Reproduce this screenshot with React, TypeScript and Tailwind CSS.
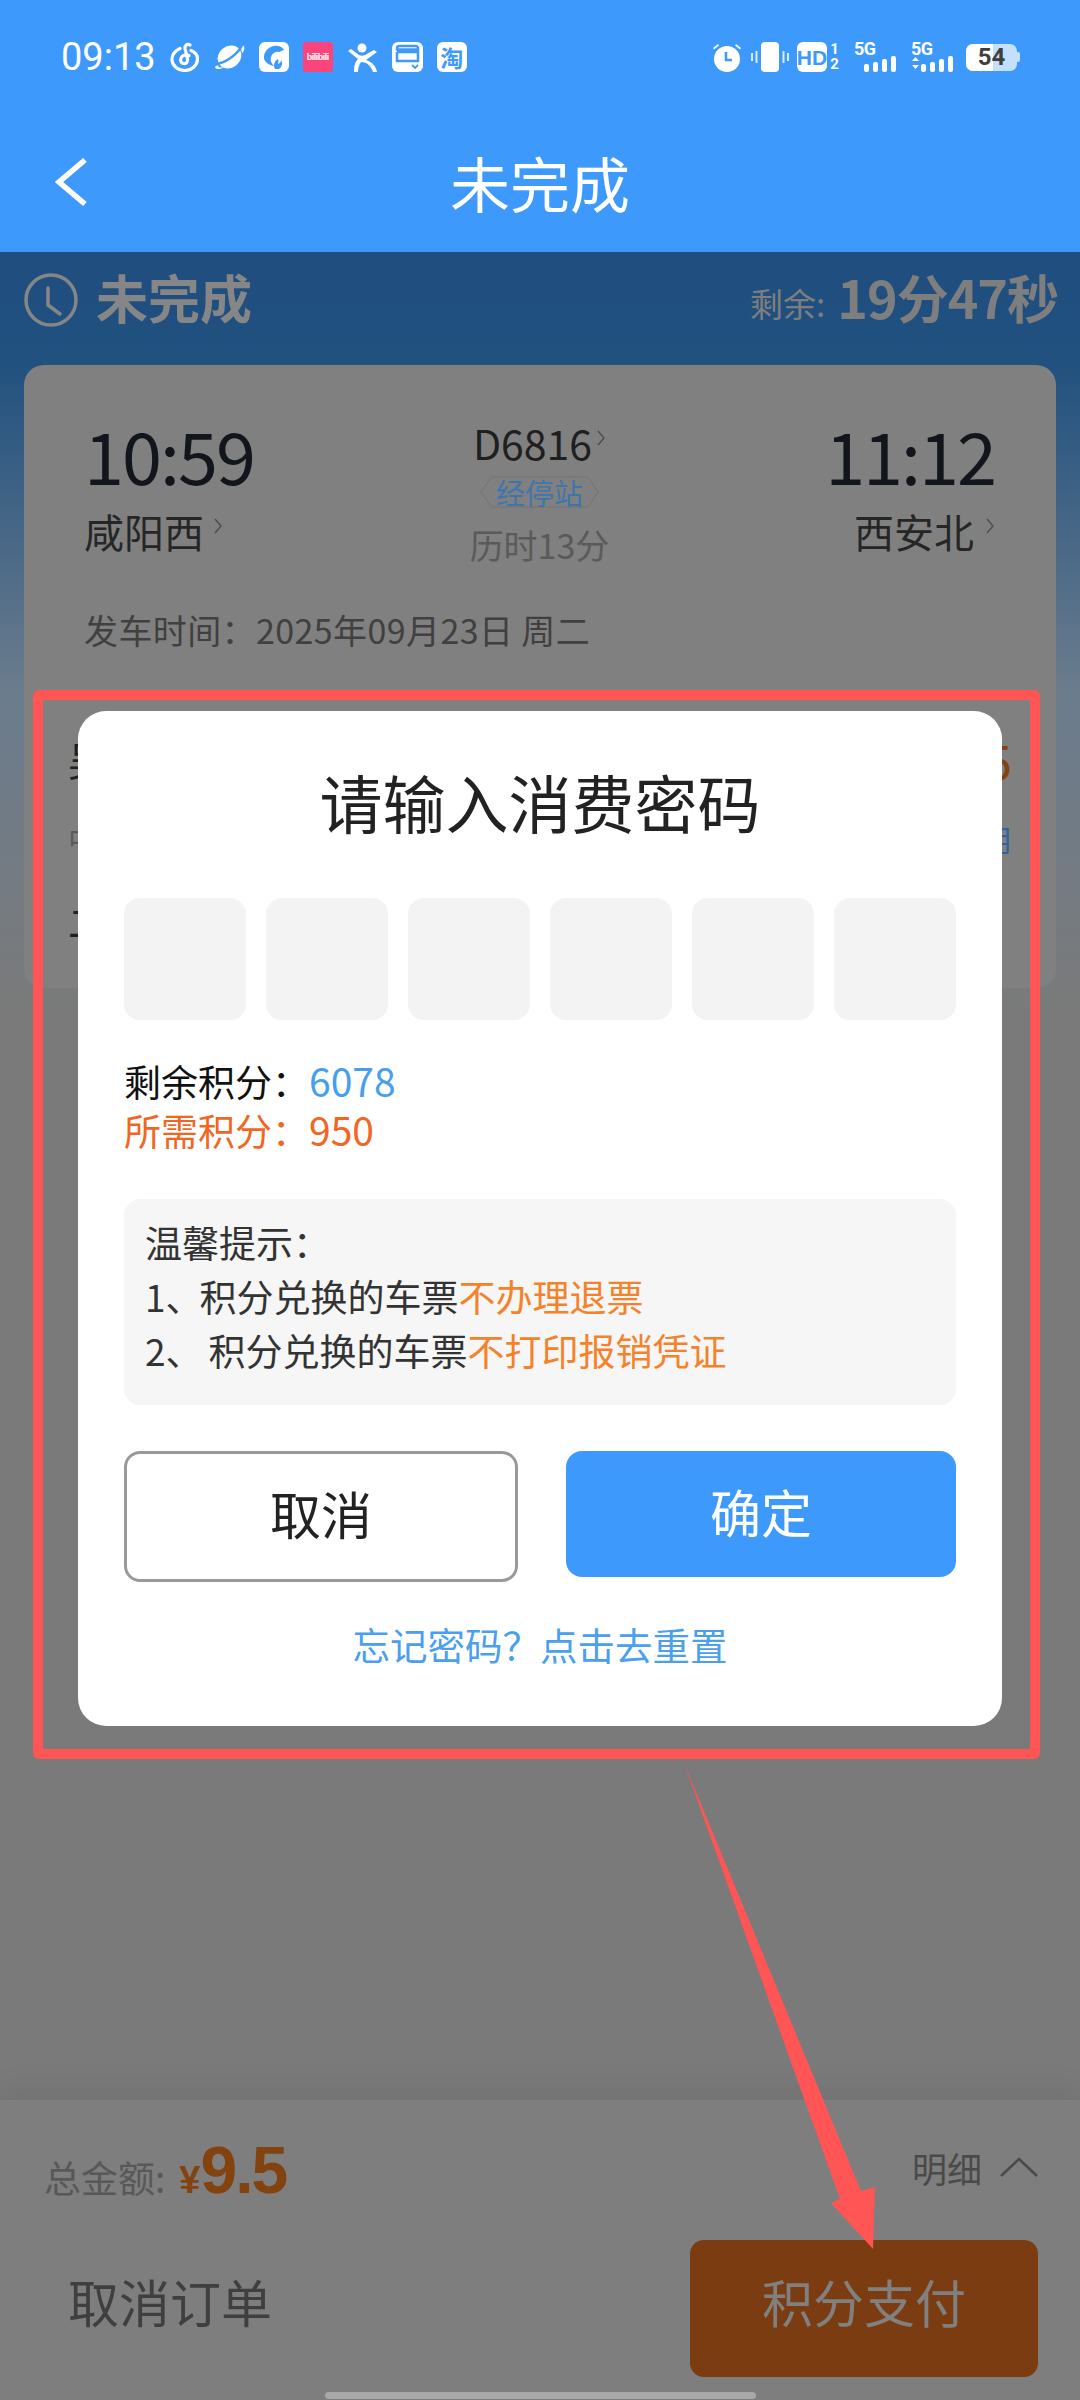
const cjk = "font-['Noto_Sans_CJK_SC','Noto_Sans',sans-serif]";

function Chevron({ className }: { className: string }) {
  return (
    <svg viewBox="0 0 10 20" className={className} fill="none" stroke="currentColor" strokeWidth="1.3">
      <path d="M2 3l6 7-6 7" />
    </svg>
  );
}

function StatusLeftIcons() {
  return (
    <div className="flex items-center ml-[14px] gap-[14px]">
      <svg viewBox="0 0 30 30" className="w-[30px] h-[30px]" fill="none" stroke="white" strokeWidth="3.200" strokeLinecap="round">
        <path d="M20 3c-3-1.500-5.500 .5-5 3.500l2.500 10.500c.6 3-1.500 5-4 4.500S10 18.500 11 16s4.500-4 8-2.500" />
        <path d="M10 6.500C4.500 9 1.800 13 2 18c.3 6 6 10.500 13 10.500S27.500 23 27.500 17c0-4-2.500-7-6.500-8.500" />
      </svg>
      <svg viewBox="0 0 32 30" className="w-[31px] h-[30px]">
        <ellipse cx="16" cy="15" rx="11" ry="13" transform="rotate(50 16 15)" fill="white" />
        <path d="M3 22C11 21 22 14 28 5" fill="none" stroke="#3d99fc" strokeWidth="2.500" />
        <path d="M1 25c0 2 3 3 6 2l3-1-5-.5-1-2zM30 3l1 1c1 2 0 5-2 7l-1-4z" fill="white" />
      </svg>
      <div className="w-[30px] h-[30px] rounded-[6px] bg-white flex items-center justify-center">
        <svg viewBox="0 0 30 30" className="w-[30px] h-[30px]" fill="#3d99fc">
          <path d="M5 14C6 8 12 3 19 4c2 0 4 1 6 4l-3 1-1 1c-4-1-8 1-9 5-1 4 1 7 3 9-6-1-11-5-10-10z" />
          <path d="M16 27c-2-3-1-8 3-10 1 2 0 3 0 5 2-1 3-2 3-4 2 3 1 7-2 9z" />
        </svg>
      </div>
      <div className="w-[30px] h-[30px] rounded-[3px] bg-[#f9447c] flex items-center justify-center overflow-hidden">
        <span className="text-[9px] leading-none text-white font-['Liberation_Sans',sans-serif] font-bold tracking-[-0.5px]">bilibili</span>
      </div>
      <svg viewBox="0 0 31 30" className="w-[31px] h-[30px]" fill="white">
        <circle cx="15" cy="6" r="4.500" />
        <path d="M1 9l3-2 8 6c2 1 4 1 6 0l9-5 3 2-11 8c6 2 10 6 11 12h-4c-2-6-6-10-12-10-2 3-3 6-3 10H7c0-6 1-10 4-13z" />
      </svg>
      <svg viewBox="0 0 31 30" className="w-[31px] h-[30px]">
        <rect width="31" height="30" rx="6" fill="white" />
        <path d="M5 7.500V6c0-1 1-2 2-2h17c1 0 2 1 2 2v1.500zM5 10h21v1.500M5 10v9h21v-9" fill="none" stroke="#3d99fc" strokeWidth="2.500" />
        <path d="M20 23l3 3 3-3" fill="none" stroke="#3d99fc" strokeWidth="1.800" />
      </svg>
      <div className="w-[30px] h-[30px] rounded-[6px] bg-white flex items-center justify-center">
        <span className="text-[23px] leading-none font-bold text-[#3d99fc]">淘</span>
      </div>
    </div>
  );
}

function StatusRightIcons() {
  return (
    <div className="flex items-center">
      <svg viewBox="0 0 30 30" className="w-[30px] h-[30px]" fill="white">
        <circle cx="15" cy="17" r="13" />
        <path d="M14 10v8h6" fill="none" stroke="#3d99fc" strokeWidth="2.500" />
        <path d="M1 6l5-4 1 1.500-5 4zM29 6l-5-4-1 1.500 5 4z" />
      </svg>
      <svg viewBox="0 0 38 30" className="w-[38px] h-[30px] ml-[9px]" fill="white">
        <rect x="10" y="0" width="18" height="30" rx="4" />
        <rect x="4.500" y="9" width="2" height="12" opacity="0.8" />
        <rect x="0" y="11" width="2" height="8" opacity="0.8" />
        <rect x="31.500" y="9" width="2" height="12" opacity="0.8" />
        <rect x="36" y="11" width="2" height="8" opacity="0.8" />
      </svg>
      <div className="ml-[8px] w-[30px] h-[30px] rounded-[6px] bg-white flex items-center justify-center">
        <span className="text-[21px] leading-none font-black text-[#3d99fc] font-['Liberation_Sans',sans-serif]">HD</span>
      </div>
      <div className="w-[13px] ml-[1px] h-[30px] flex flex-col items-center justify-between font-['Roboto',sans-serif] font-bold text-white text-[15px] leading-[15px]">
        <span>1</span>
        <span>2</span>
      </div>
      <Signal arrows={false} />
      <Signal arrows />
      <div className="relative ml-[11px] w-[51px] h-[27px] rounded-[7px] bg-[#c5e0ff] overflow-hidden flex items-center justify-center">
        <div className="absolute left-0 top-0 h-full w-[27px] bg-white" />
        <span className="relative text-[24px] leading-none font-bold text-[#3f3f3f] font-['Roboto',sans-serif]">54</span>
      </div>
      <div className="w-[3px] h-[10px] rounded-r-[2px] bg-[#c5e0ff]" />
    </div>
  );
}

function Signal({ arrows }: { arrows: boolean }) {
  return (
    <div className="relative w-[44px] h-[30px] ml-[13px]">
      <span className="absolute left-0 top-[-3px] text-white font-bold text-[18px] leading-[20px] font-['Roboto',sans-serif] tracking-[-0.5px]">5G</span>
      <svg viewBox="0 0 44 30" className="absolute inset-0 w-[44px] h-[30px]" fill="white">
        {arrows && <path d="M1 19l3.500-4 3.500 4zM1 23h7l-3.500 4z" />}
        <rect x="10" y="22" width="5" height="8" rx="2" />
        <rect x="19" y="20" width="5" height="10" rx="2" />
        <rect x="28" y="17" width="5" height="13" rx="2" />
        <rect x="37" y="14" width="5" height="16" rx="2" />
      </svg>
    </div>
  );
}

function TrainCard() {
  return (
    <div className="mx-[24px] h-[623px] rounded-[20px] bg-[#808080] overflow-hidden">
      <div className="flex items-start pl-[60px] pr-[61px] pt-[49px]">
        <div className="flex-1">
          <div className="text-[72px] leading-[80px] text-[#12151c] tracking-[-2px]">10:59</div>
          <div className="mt-[12px] h-[50px] flex items-center text-[40px] leading-[50px] text-[#262626]">
            咸阳西
            <Chevron className="w-[10px] h-[20px] ml-[9px] mb-[10px] text-[#4a4a4a]" />
          </div>
        </div>
        <div className="w-[180px] flex flex-col items-center">
          <div className="mt-[8px] h-[40px] flex items-center text-[41px] leading-[40px] text-[#1f1f1f]">
            D6816
            <Chevron className="w-[10px] h-[20px] ml-[4px] mb-[8px] text-[#4a4a4a]" />
          </div>
          <div className="relative mt-[10px] h-[40px] px-[16px] flex items-center">
            <svg viewBox="0 0 126 32" preserveAspectRatio="none" className="absolute inset-0 w-full h-[32px] top-[4px]" fill="none" stroke="#737373" strokeWidth="1">
              <path d="M12 1h102l11 15-11 15H12L1 16z" />
            </svg>
            <span className="relative text-[29px] leading-[40px] text-[#3f75ac]">经停站</span>
          </div>
          <div className="mt-[13px] h-[40px] text-[34px] leading-[40px] text-[#5a5a5a] whitespace-nowrap">历时13分</div>
        </div>
        <div className="flex-1 flex flex-col items-end">
          <div className="text-[72px] leading-[80px] text-[#12151c] tracking-[-2px]">11:12</div>
          <div className="mt-[12px] h-[50px] flex items-center text-[40px] leading-[50px] text-[#262626]">
            西安北
            <Chevron className="w-[10px] h-[20px] ml-[11px] mb-[10px] text-[#4a4a4a]" />
          </div>
        </div>
      </div>
      <div className="mt-[43px] px-[60px] text-[34px] tracking-[0.4px] leading-[44px] text-[#404040] whitespace-nowrap">发车时间：2025年09月23日 周二</div>

      <div className="mt-[82px] px-[44px] flex items-center justify-between h-[50px]">
        <span className="text-[40px] leading-[50px] text-[#1f1f1f]">吴**</span>
        <span className="text-[48px] leading-[50px] text-[#83430f]">¥9.5</span>
      </div>
      <div className="mt-[34px] px-[44px] flex items-center justify-between h-[40px]">
        <span className="text-[30px] leading-[40px] text-[#5a5a5a]">中国居民身份证</span>
        <span className="text-[30px] leading-[40px] text-[#2f64a0]">积分使用</span>
      </div>
      <div className="mt-[38px] px-[44px] h-[50px] text-[38px] leading-[50px] text-[#1f1f1f]">二等座</div>
    </div>
  );
}

function PasswordDialog() {
  return (
    <div className="absolute left-[78px] top-[711px] w-[924px] h-[1015px] rounded-[28px] bg-white px-[46px] pt-[50px]">
      <div className="h-[80px] text-center text-[63px] leading-[80px] text-[#222222]">请输入消费密码</div>
      <div className="mt-[57px] flex justify-between">
        {[0, 1, 2, 3, 4, 5].map((i) => (
          <div key={i} className="w-[122px] h-[122px] rounded-[16px] bg-[#f3f3f3]" />
        ))}
      </div>
      <div className="mt-[36px] text-[37px] leading-[48px] text-[#111111]">
        剩余积分：<span className="text-[#459eee] text-[39px]">6078</span>
      </div>
      <div className="text-[37px] leading-[48px] text-[#f2661f]">
        所需积分：<span className="text-[39px]">950</span>
      </div>
      <div className="mt-[45px] h-[206px] rounded-[16px] bg-[#f6f6f6] px-[21px] pt-[16px] text-[37px] leading-[54px] text-[#333333] whitespace-nowrap">
        <div>温馨提示：</div>
        <div>
          <span className="mr-[-3px]">1、</span>积分兑换的车票<span className="text-[#f5822a]">不办理退票</span>
        </div>
        <div>
          <span className="mr-[6px]">2、</span>积分兑换的车票<span className="text-[#f5822a]">不打印报销凭证</span>
        </div>
      </div>
      <div className="mt-[46px] flex items-start justify-between">
        <button className="w-[394px] h-[131px] rounded-[16px] border-[3px] border-[#999999] bg-white pb-[6px] text-[51px] text-[#222222]">取消</button>
        <button className="w-[390px] h-[126px] rounded-[16px] bg-[#3d99fc] pb-[6px] text-[51px] text-white">确定</button>
      </div>
      <div className="mt-[37px] text-center text-[37.5px] leading-[50px] text-[#4a9fee]">忘记密码？点击去重置</div>
    </div>
  );
}

export default function App() {
  return (
    <div className={`relative w-[1080px] h-[2400px] overflow-hidden flex flex-col ${cjk}`}>
      <header className="h-[252px] bg-[#3d99fc] shrink-0">
        <div className="pt-[42px] pl-[61px] pr-[60px] flex items-center justify-between h-[72px]">
          <div className="flex items-center">
            <span className="text-[38px] leading-[30px] text-white font-['Roboto',sans-serif]">09:13</span>
            <StatusLeftIcons />
          </div>
          <StatusRightIcons />
        </div>
        <div className="mt-[60px] h-[100px] grid grid-cols-[1fr_auto_1fr] items-center">
          <svg viewBox="0 0 34 48" className="ml-[54px] w-[34px] h-[48px]" fill="none" stroke="white" strokeWidth="5.500">
            <path d="M31 2L5 24l26 22" />
          </svg>
          <span className="text-[60px] leading-[100px] text-white">未完成</span>
          <span />
        </div>
      </header>

      <main className="flex-1 bg-[linear-gradient(#1f4e7f_0px,#21517f_110px,#6b7c8d_440px,#7a7a7a_760px)]">
        <div className="h-[113px] pl-[24px] pr-[22px] flex items-start justify-between">
          <div className="flex items-center h-[96px]">
            <svg viewBox="0 0 54 54" className="w-[54px] h-[54px]" fill="none" stroke="#868686" strokeWidth="3.500" strokeLinecap="round">
              <circle cx="27" cy="27" r="25" />
              <path d="M24 15v17l12 9" />
            </svg>
            <span className="ml-[18px] mb-[6px] text-[52px] leading-none font-bold text-[#868686]">未完成</span>
          </div>
          <div className="flex items-center h-[96px] text-[#7e7e7e]">
            <span className="text-[33px] leading-none mt-[6px]">剩余:</span>
            <span className="ml-[12px] mb-[6px] text-[52px] leading-none font-bold tracking-[-1px]">19分47秒</span>
          </div>
        </div>
        <TrainCard />
      </main>

      <footer className="h-[300px] shrink-0 bg-[#7e7e7e] shadow-[0_-16px_24px_rgba(0,0,0,0.05)] pt-[37px]">
        <div className="h-[80px] pl-[44px] pr-[42px] flex items-center justify-between">
          <div className="flex items-baseline mb-[14px]">
            <span className="text-[37px] leading-none text-[#585858]">总金额:</span>
            <span className="ml-[14px] text-[38px] leading-none font-bold text-[#83430f] font-['Liberation_Sans',sans-serif]">¥</span>
            <span className="text-[66px] leading-none font-bold tracking-[-2px] text-[#83430f] font-['Liberation_Sans',sans-serif]">9.5</span>
          </div>
          <div className="flex items-center mb-[20px]">
            <span className="text-[35px] leading-none text-[#4a4a4a]">明细</span>
            <svg viewBox="0 0 38 20" className="ml-[18px] w-[38px] h-[20px]" fill="none" stroke="#4a4a4a" strokeWidth="2.500">
              <path d="M1 19L19 2l18 17" />
            </svg>
          </div>
        </div>
        <div className="mt-[23px] pl-[68px] pr-[42px] flex items-center justify-between">
          <span className="text-[51px] leading-none text-[#3f3f3f] mb-[14px]">取消订单</span>
          <button className="w-[348px] h-[137px] rounded-[14px] bg-[#7a3c10] pb-[14px] text-[51px] text-[#808080]">积分支付</button>
        </div>
        <div className="mt-[15px] mx-auto w-[431px] h-[7px] rounded-full bg-[#a8a8a8]" />
      </footer>

      <PasswordDialog />

      <div className="absolute left-[33px] top-[690px] w-[1007px] h-[1069px] border-[10px] border-[#ff5555] rounded-[6px] pointer-events-none" />
      <svg viewBox="0 0 1080 2400" className="absolute inset-0 w-[1080px] h-[2400px] pointer-events-none" fill="#ff5555">
        <polygon points="684,1763 861,2191 875,2187 873,2249 831,2203 840,2199" />
      </svg>
    </div>
  );
}
